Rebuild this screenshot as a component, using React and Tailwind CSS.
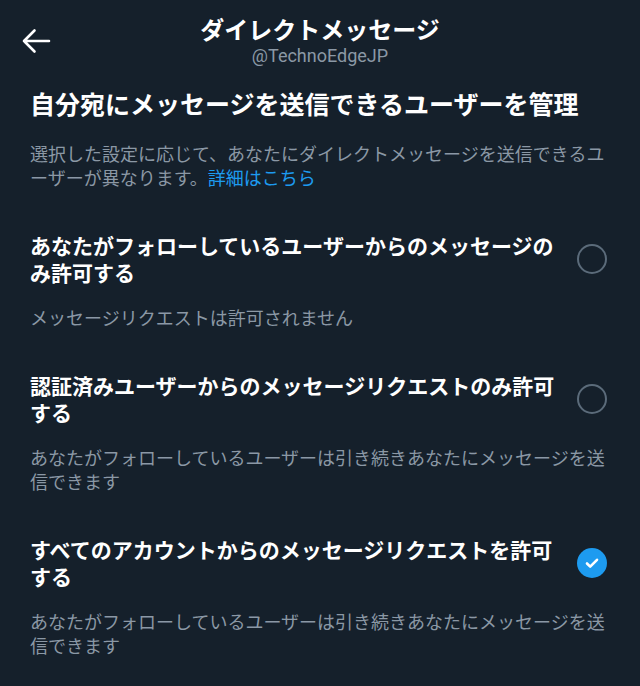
import React, { useState } from 'react';

const options = [
  {
    title: 'あなたがフォローしているユーザーからのメッセージのみ許可する',
    sub: 'メッセージリクエストは許可されません',
  },
  {
    title: '認証済みユーザーからのメッセージリクエストのみ許可する',
    sub: 'あなたがフォローしているユーザーは引き続きあなたにメッセージを送信できます',
  },
  {
    title: 'すべてのアカウントからのメッセージリクエストを許可する',
    sub: 'あなたがフォローしているユーザーは引き続きあなたにメッセージを送信できます',
  },
];

const Radio = ({ checked }) =>
  checked ? (
    <div className="w-[30px] h-[30px] rounded-full bg-[#1d9bf0] flex items-center justify-center">
      <svg width="16" height="16" viewBox="0 0 16 16" fill="none">
        <path d="M3 8.5l3.2 3.2L13 4.8" stroke="#fff" strokeWidth="2.6" strokeLinecap="round" strokeLinejoin="round" />
      </svg>
    </div>
  ) : (
    <div className="w-[30px] h-[30px] rounded-full border-[2.5px] border-[#5b6b7a]" />
  );

const App = () => {
  const [selected, setSelected] = useState(2);

  return (
    <div
      className="min-h-screen w-[640px] h-[686px] overflow-hidden bg-[#15202b] text-white"
      style={{ fontFamily: '"Noto Sans CJK JP", "Noto Sans", Roboto, sans-serif' }}
    >
      <header className="grid grid-cols-[80px_1fr_80px] items-center pt-[14px]">
        <button className="pl-[21px] text-white">
          <svg width="30" height="26" viewBox="0 0 30 26" fill="none">
            <path d="M3 13h25M13.5 2.5L3 13l10.5 10.5" stroke="#fff" strokeWidth="2.6" strokeLinecap="round" strokeLinejoin="round" />
          </svg>
        </button>
        <div className="text-center">
          <h1 className="text-[24px] leading-[30px] font-bold">ダイレクトメッセージ</h1>
          <p className="text-[18px] leading-[24px] text-[#8b98a5]" style={{ fontFamily: 'Roboto, "Noto Sans", sans-serif' }}>
            @TechnoEdgeJP
          </p>
        </div>
        <div />
      </header>

      <main className="px-[30px]">
        <h2 className="mt-[18px] text-[25px] leading-[34px] font-bold">自分宛にメッセージを送信できるユーザーを管理</h2>
        <div className="mt-[21px] text-[18px] leading-[24px] text-[#8b98a5]">
          選択した設定に応じて、あなたにダイレクトメッセージを送信できるユーザーが異なります。
          <a className="text-[#1d9bf0]">詳細はこちら</a>
        </div>

        {options.map((o, i) => (
          <div key={i} className="pt-[43px] cursor-pointer" onClick={() => setSelected(i)}>
            <div className="flex items-center justify-between">
              <p className="w-[530px] text-[21px] leading-[27px] font-bold">{o.title}</p>
              <div className="mr-[3px]">
                <Radio checked={selected === i} />
              </div>
            </div>
            <p className="mt-[19px] text-[18px] leading-[24px] text-[#8b98a5]">{o.sub}</p>
          </div>
        ))}
      </main>
    </div>
  );
};

export default App;
